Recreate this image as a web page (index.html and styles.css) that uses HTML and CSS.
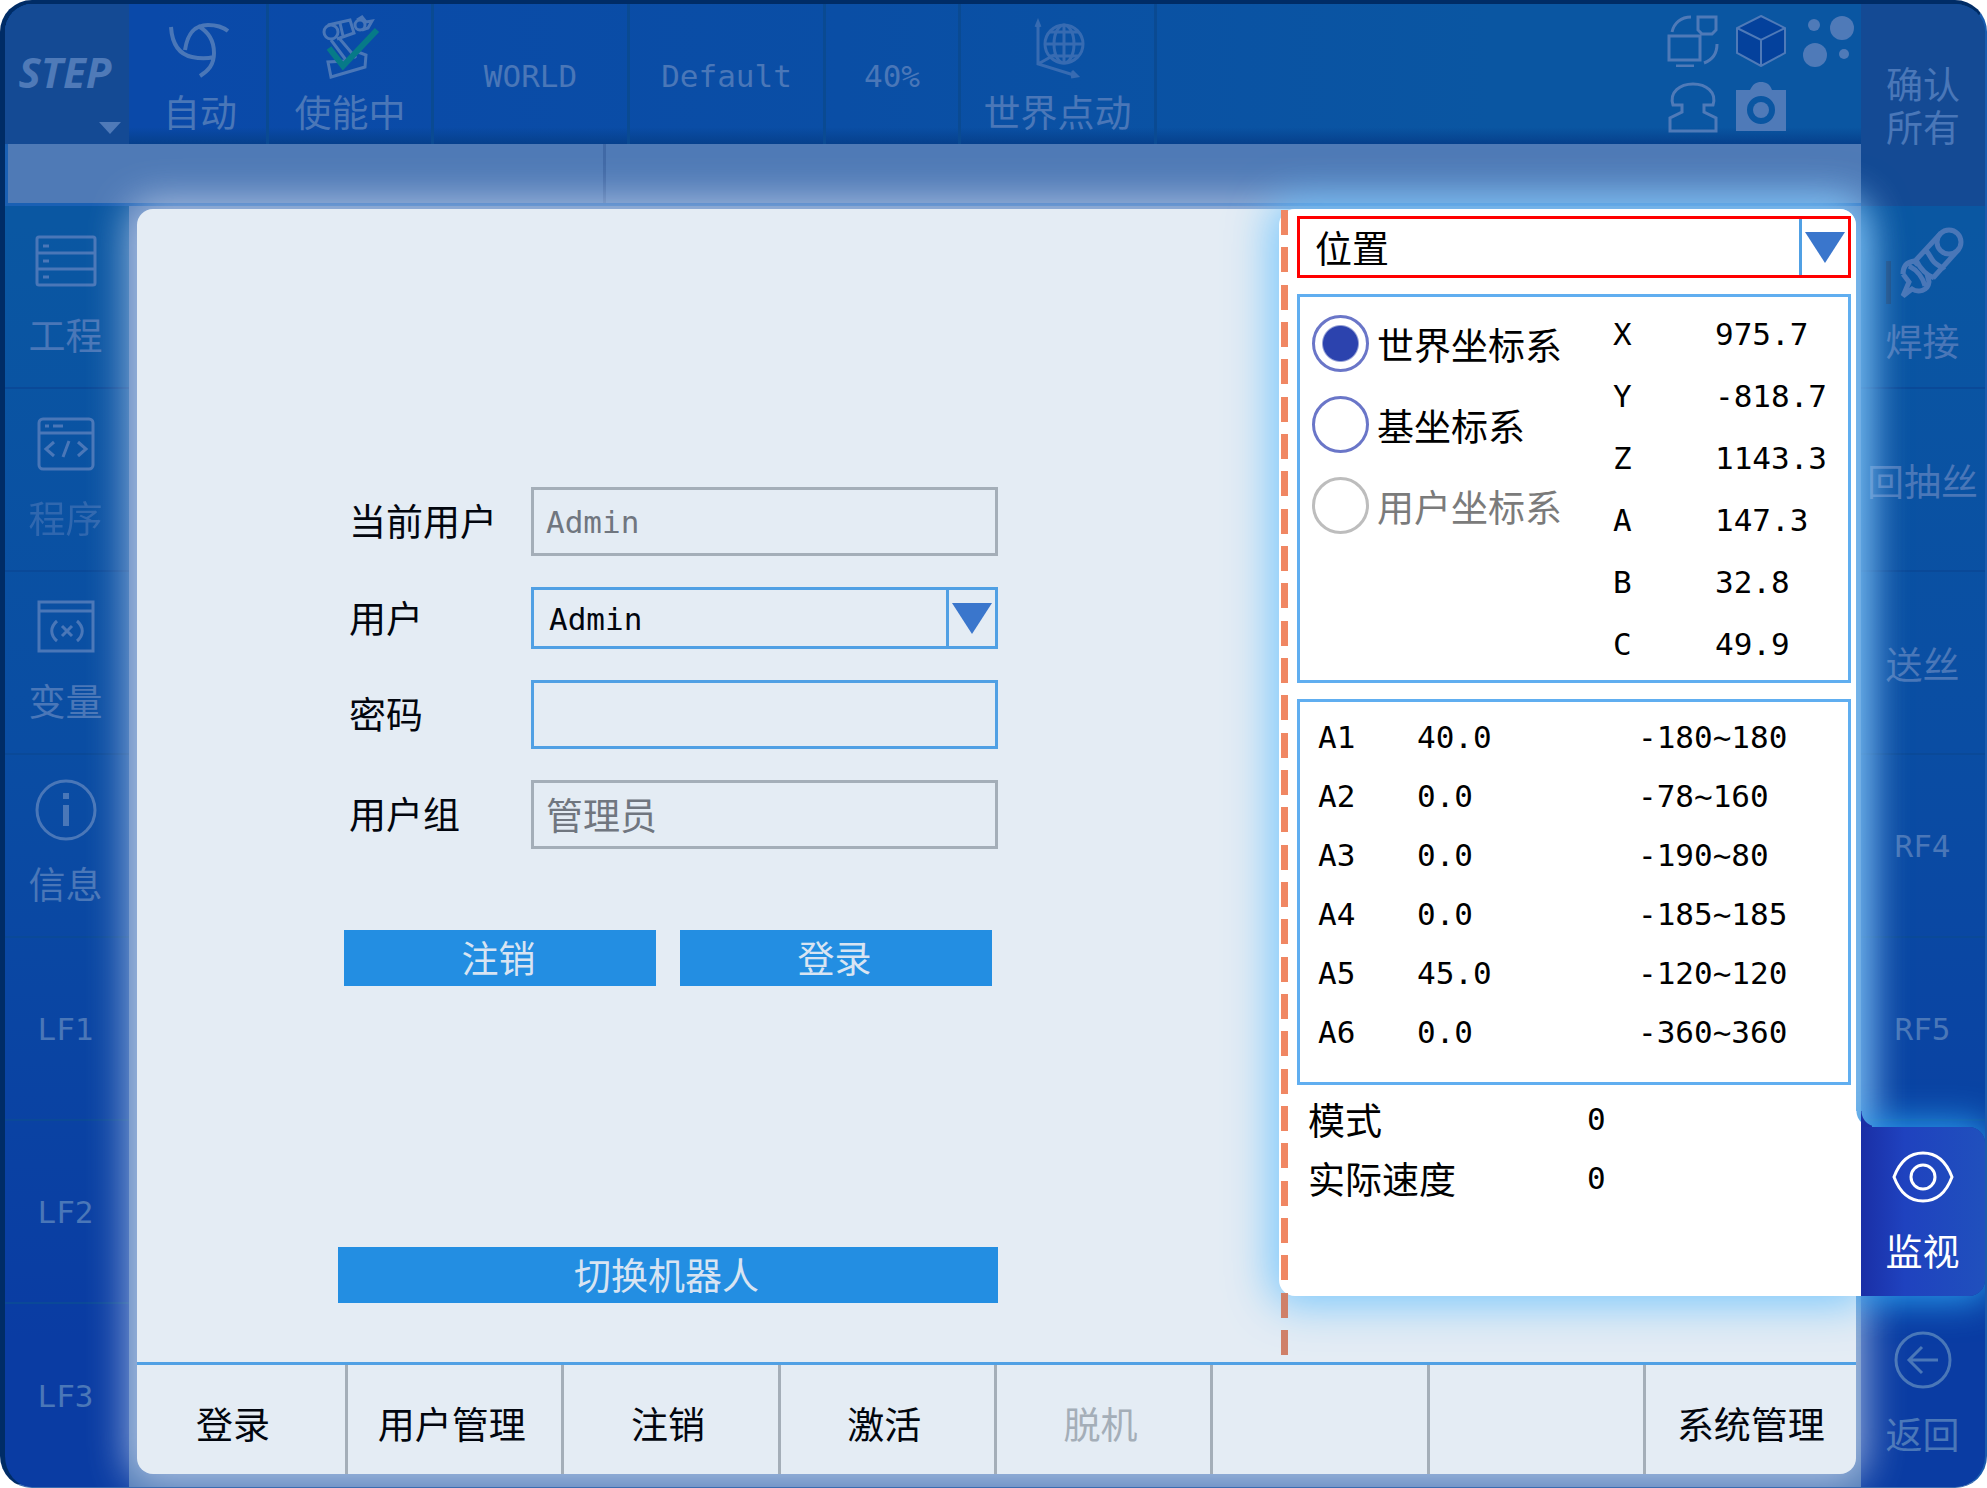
FILE: index.html
```html
<!DOCTYPE html>
<html lang="zh-CN">
<head>
<meta charset="utf-8">
<title>STEP</title>
<link rel="stylesheet" href="styles.css">
</head>
<body>
<div class="screen">
  <header class="topbar">
    <button class="brand" type="button">STEP<span class="caret"></span></button>
    <div class="status">
      <svg class="top-icon" viewBox="0 0 60 62" fill="none" stroke="currentColor" stroke-width="4"><path d="M1 10C2 25 8 37 22 40c9 2 14 2 22 0M15 33C17 20 22 8 38 8c8 0 15 2 20 6M28 9c11 6 16 16 16 27 0 12-6 18-14 23"/></svg>
      <span>自动</span>
    </div>
    <div class="status">
      <svg class="top-icon" viewBox="0 0 60 62" fill="none" stroke="currentColor" stroke-width="3"><circle cx="11" cy="15" r="7"/><path d="M8 8l22-5 4 13-17 6M20 6l3 13"/><circle cx="40" cy="8" r="5"/><path d="M37 3l5-3 4 5 6-1-4 7-6 2M11 23l15 20M19 21l17 20M8 45l3 15 34-10 1-12-8-3-12 9z"/><path class="tick" d="M9 31l14 18L57 13" stroke-width="6"/></svg>
      <span>使能中</span>
    </div>
    <div class="status mono">WORLD</div>
    <div class="status mono">Default</div>
    <div class="status mono">40%</div>
    <div class="status">
      <svg class="top-icon faint" viewBox="0 0 60 62" fill="none" stroke="currentColor" stroke-width="3"><path d="M10 5v42l39 12M8 10l2-5 2 5M44 54l5 5-6 1M10 47l18-10"/><circle cx="36" cy="27" r="19"/><ellipse cx="36" cy="27" rx="10" ry="19"/><path d="M36 8v38M17 27h38M22 15h28M22 39h28"/></svg>
      <span>世界点动</span>
    </div>
    <div class="tools">
      <svg viewBox="0 0 52 52" fill="none" stroke="currentColor" stroke-width="3"><path d="M5 17C7 8 14 2 24 2M31 2h18v13l-4 4H35l-4-4zM2 21h31v24H2zM9 51h18M50 29c0 10-5 16-13 19"/></svg>
      <svg viewBox="0 0 52 52" stroke="currentColor" stroke-width="2"><path class="cube" d="M26 1l24 12v25L26 51 2 38V13z"/><path d="M2 13l24 12 24-12M26 25v26" fill="none"/></svg>
      <svg viewBox="0 0 52 52" fill="currentColor"><circle cx="11" cy="10" r="6"/><circle cx="39" cy="13" r="12"/><circle cx="12" cy="40" r="12"/><circle cx="41" cy="39" r="5"/></svg>
      <svg viewBox="0 0 52 52" fill="none" stroke="currentColor" stroke-width="3"><path d="M15 30v-7H6C2 10 13 2 26 2s24 8 20 21h-9v7l12 6v13H3V36z"/></svg>
      <svg viewBox="0 0 52 52" fill="currentColor"><path fill-rule="evenodd" d="M1 8h14c3-6 6-8 11-8s9 2 11 8h14v41H1zM26 14a14 14 0 1 0 0 28 14 14 0 0 0 0-28z"/><circle cx="26" cy="28" r="8"/></svg>
    </div>
  </header>
  <button class="confirm" type="button">确认<br>所有</button>
  <div class="message"><span></span><span></span></div>

  <nav class="side left">
    <button type="button"><svg viewBox="0 0 62 62" fill="none" stroke="currentColor" stroke-width="3"><rect x="2" y="7" width="58" height="48" rx="2"/><path d="M2 23h58M2 39h58M8 16h6M8 31h6M8 47h6"/></svg>工程</button>
    <button class="dim" type="button"><svg viewBox="0 0 62 62" fill="none" stroke="currentColor" stroke-width="3"><rect x="4" y="6" width="54" height="50" rx="4"/><path d="M4 20h54M10 13h4M18 13h10M19 29l-8 7 8 7M34 28l-6 16M43 29l8 7-8 7"/></svg><span>程序</span></button>
    <button type="button"><svg viewBox="0 0 62 62" fill="none" stroke="currentColor" stroke-width="3"><path d="M4 6h54v49H4zM4 15h54M22 25c-7 6-7 14 0 20M42 25c7 6 7 14 0 20M27 30l10 10M37 30L27 40"/></svg>变量</button>
    <button type="button"><svg viewBox="0 0 62 62" fill="none" stroke="currentColor" stroke-width="3"><circle cx="31" cy="31" r="29"/><path d="M31 26v21M31 14v6" stroke-width="6"/></svg>信息</button>
    <button class="mono" type="button">LF1</button>
    <button class="mono" type="button">LF2</button>
    <button class="mono" type="button">LF3</button>
  </nav>

  <main class="panel">
    <form class="login">
      <div class="fields">
        <label for="current">当前用户</label>
        <input id="current" class="mono" type="text" value="Admin" disabled>
        <label for="user">用户</label>
        <div class="picker">
          <select id="user" class="mono"><option>Admin</option></select>
          <span class="arrow"></span>
        </div>
        <label for="password">密码</label>
        <input id="password" type="password">
        <label for="group">用户组</label>
        <input id="group" type="text" value="管理员" disabled>
      </div>
      <div class="actions">
        <button type="button">注销</button>
        <button type="button">登录</button>
      </div>
      <button class="switch" type="button">切换机器人</button>
    </form>

    <div class="monitor-side">
      <section class="monitor">
        <div class="picker alert">
          <select aria-label="监视"><option>位置</option></select>
          <span class="arrow"></span>
        </div>
        <div class="box frames">
          <div class="radios">
            <label><input type="radio" name="frame" checked>世界坐标系</label>
            <label><input type="radio" name="frame">基坐标系</label>
            <label class="off"><input type="radio" name="frame" disabled>用户坐标系</label>
          </div>
          <table class="pose mono">
            <tr><th>X</th><td>975.7</td></tr>
            <tr><th>Y</th><td>-818.7</td></tr>
            <tr><th>Z</th><td>1143.3</td></tr>
            <tr><th>A</th><td>147.3</td></tr>
            <tr><th>B</th><td>32.8</td></tr>
            <tr><th>C</th><td>49.9</td></tr>
          </table>
        </div>
        <div class="box axes">
          <table class="mono">
            <tr><th>A1</th><td>40.0</td><td>-180~180</td></tr>
            <tr><th>A2</th><td>0.0</td><td>-78~160</td></tr>
            <tr><th>A3</th><td>0.0</td><td>-190~80</td></tr>
            <tr><th>A4</th><td>0.0</td><td>-185~185</td></tr>
            <tr><th>A5</th><td>45.0</td><td>-120~120</td></tr>
            <tr><th>A6</th><td>0.0</td><td>-360~360</td></tr>
          </table>
        </div>
        <dl class="summary">
          <dt>模式</dt><dd class="mono">0</dd>
          <dt>实际速度</dt><dd class="mono">0</dd>
        </dl>
      </section>
    </div>

    <nav class="tabs">
      <button type="button">登录</button>
      <button type="button">用户管理</button>
      <button type="button">注销</button>
      <button type="button">激活</button>
      <button type="button" disabled>脱机</button>
      <button type="button" aria-label="F6"></button>
      <button type="button" aria-label="F7"></button>
      <button type="button">系统管理</button>
    </nav>
  </main>

  <nav class="side right">
    <button class="weld" type="button"><svg viewBox="0 0 68 68" fill="none" stroke="currentColor" stroke-width="5"><circle cx="60" cy="12" r="12"/><path d="M52 3L27 30M70 19L44 48M36 20c4 2 5 8 9 12s8 5 10 8M27 30c3 6 8 14 18 18M14 44c0-8 4-12 11-13l4 4M14 44l6 8-6 14 9-7c6 4 16 2 17-7l-2-8M20 36c8 4 14 12 16 20"/></svg>焊接</button>
    <button type="button">回抽丝</button>
    <button type="button">送丝</button>
    <button class="mono" type="button">RF4</button>
    <button class="mono" type="button">RF5</button>
    <button class="active" type="button"><svg viewBox="0 0 62 62" fill="none" stroke="currentColor" stroke-width="3"><path d="M2 31C8 15 18 7 31 7s23 8 29 24c-6 16-16 24-29 24S8 47 2 31z"/><circle cx="31" cy="31" r="12"/></svg>监视</button>
    <button type="button"><svg viewBox="0 0 62 62" fill="none" stroke="currentColor" stroke-width="3"><circle cx="31" cy="31" r="27"/><path d="M17 31h29M30 18L17 31l13 13"/></svg>返回</button>
  </nav>
</div>
</body>
</html>
```
FILE: styles.css
```css
* { box-sizing: border-box; }

body {
  margin: 0;
  background: #fff;
  font: 37px/48px "Noto Sans CJK SC", sans-serif;
}

button, input, select { font: inherit; color: inherit; margin: 0; }
button { border: 0; background: none; padding: 0; }

.mono { font: 31px/48px "DejaVu Sans Mono", monospace; }

/* Shell */
.screen {
  display: grid;
  grid-template: 140px 62px 1fr / 124px 1fr 124px;
  min-height: 100vh;
  overflow: hidden;
  border: solid #002c66;
  border-width: 4px 2px 1px 5px;
  border-right-color: #1a5cae;
  border-bottom-color: #3a6cb0;
  border-radius: 32px;
  background: linear-gradient(#0a57a2 15%, #0a4da3 50%, #0a3ca3 90%);
  color: #4a77b8;
}

/* Top bar */
.topbar {
  grid-area: 1 / 1 / 2 / 3;
  display: flex;
  background:
    linear-gradient(transparent 88%, #06408c),
    linear-gradient(90deg, #0a49a9 8%, #0a4ea5 45%, #0a56a2 80%);
}
.brand {
  position: relative;
  width: 124px;
  margin-right: 5px;
  padding: 0 4px 4px 0;
  background: #144a94;
  color: #4f7ab8;
  font: italic bold 42px/48px "Open Sans", sans-serif;
}
.caret {
  position: absolute;
  right: 8px;
  bottom: 10px;
  border: solid transparent;
  border-width: 12px 11px 0;
  border-top-color: #4f7ab8;
}
.status {
  display: flex;
  flex-direction: column;
  align-items: center;
  justify-content: center;
  width: 196px;
  padding-top: 4px;
  border-right: 3px solid #0a4a92;
}
.status:nth-of-type(1) { width: 135px; }
.status:nth-of-type(2) { width: 165px; }
.status:nth-of-type(5) { width: 135px; }
.status span { margin-top: 8px; }
.top-icon { width: 60px; height: 62px; overflow: visible; }
.faint { opacity: 0.7; }
.tick { stroke: #067a88; }
.tools {
  display: grid;
  grid-template-columns: repeat(3, 52px);
  gap: 15px 16px;
  align-content: start;
  margin-left: auto;
  padding: 11px 6px 0 0;
  color: #4f7ab8;
}
.tools svg { width: 52px; height: 52px; }
.cube { fill: #04419c; }
.confirm {
  grid-area: 1 / 3 / 3 / 4;
  background: #144a94;
  line-height: 43px;
}
.message {
  grid-area: 2 / 1 / 3 / 3;
  display: grid;
  grid-template-columns: 595px 1fr;
  border: solid #1a60b4;
  border-width: 0 0 3px 3px;
  background: #4f7ab6;
}
.message span + span { border-left: 3px solid #4069a6; }

/* Side keys */
.side {
  display: grid;
  grid-auto-rows: 1fr;
}
.side button {
  display: flex;
  flex-direction: column;
  align-items: center;
  justify-content: center;
  gap: 18px;
  padding-right: 3px;
  white-space: nowrap;
  border-bottom: 2px solid #0a4998;
}
.side button:last-child { border-bottom: 0; }
.side button:has(svg) { padding-bottom: 5px; }
.side svg { width: 62px; height: 62px; flex: none; }
.left { grid-area: 3 / 1; }
.right { grid-area: 3 / 3; }
.right button { padding-right: 1px; }
.dim span { opacity: 0.6; }
.side .weld {
  position: relative;
  padding-bottom: 0;
}
.weld svg { width: 68px; height: 68px; overflow: visible; }
.weld::before {
  content: "";
  position: absolute;
  left: 25px;
  top: 55px;
  width: 5px;
  height: 43px;
  background: #144680;
}
.side .active {
  position: relative;
  z-index: 3;
  margin: 6px 0 8px;
  padding-bottom: 4px;
  border: 0;
  border-radius: 0 16px 16px 0;
  background: linear-gradient(90deg, #1a2fa6, #1f42bf 35%, #2050bd);
  color: #fff;
  box-shadow: 0 0 36px 4px #2aa0f0;
  clip-path: inset(-50px -50px -50px -5px);
}
/* joins the tab to the monitor pane, with a concave corner above it */
.active::before {
  content: "";
  position: absolute;
  inset: 0 100% 0 auto;
  width: 5px;
  background: #fff;
}
.active::after {
  content: "";
  position: absolute;
  left: -5px;
  bottom: 100%;
  width: 16px;
  height: 16px;
  background: radial-gradient(circle at 100% 0, transparent 15px, #1a2fa6 16px) 5px 0 no-repeat,
    radial-gradient(circle at 100% 0, transparent 15px, #fff 16px);
}

/* Main panel */
.panel {
  position: relative;
  z-index: 2;
  grid-area: 3 / 2;
  display: grid;
  grid-template: 1fr auto / 1fr 577px;
  margin: 3px 5px 13px 8px;
  border-radius: 16px;
  background: #e4ecf4;
  box-shadow: 0 0 40px 8px #d2def6bb;
  color: #02060e;
}
.screen::before {
  content: "";
  grid-area: 3 / 2;
  background: #4f7ab6;
}

/* Login form */
.login {
  width: 660px;
  margin: 278px 0 0 201px;
}
.fields {
  display: grid;
  grid-template-columns: 181px 1fr;
  gap: 31px 12px;
  align-items: center;
}
.fields label { padding: 0 0 3px 11px; }
.fields input, .fields .picker { min-width: 0; }
input[type="text"], input[type="password"] {
  height: 69px;
  padding: 0 12px 2px;
  border: 3px solid #50a0e4;
  border-radius: 0;
  background: none;
}
input:disabled { border-color: #a4aeb8; color: #70767f; }
input.mono:disabled { padding: 0 12px; }
.picker {
  position: relative;
  height: 62px;
  border: 3px solid #50a0e4;
}
.picker select {
  width: 100%;
  height: 100%;
  padding: 0 60px 0 15px;
  border: 0;
  border-radius: 0;
  background: none;
  appearance: none;
}
.arrow {
  position: absolute;
  top: 0;
  right: 0;
  bottom: 0;
  width: 49px;
  border-left: 3px solid #50a0e4;
  pointer-events: none;
}
.arrow::before {
  content: "";
  position: absolute;
  top: 13px;
  left: 3px;
  border: solid transparent;
  border-width: 31px 20px 0;
  border-top-color: #3a76cc;
}
.actions {
  display: grid;
  grid-template-columns: 1fr 1fr;
  gap: 24px;
  margin: 81px 6px 0;
}
.actions button, .switch {
  height: 56px;
  padding: 0 3px 3px 0;
  background: #238ee2;
  color: #d8e4f2;
}
.switch { display: block; width: 100%; margin-top: 261px; }

/* Monitor pane */
.monitor-side { position: relative; padding-bottom: 66px; }
.monitor-side::after {
  content: "";
  position: absolute;
  inset: 1px auto 5px 2px;
  width: 7px;
  background: linear-gradient(#f08763 94%, #cf8069 94%);
  mask: repeating-linear-gradient(#000 0 25px, transparent 25px 37px, #000 37px 62px, transparent 62px 75px, #000 75px 100px, transparent 100px 112px);
}
.monitor {
  height: 100%;
  padding: 7px 5px 52px 18px;
  border-radius: 16px 16px 0 16px;
  background: #fff;
  box-shadow: 0 0 44px 8px #5cbeffcc;
  color: #000;
}
.picker.alert { border-color: #f00; }
.box {
  margin-top: 16px;
  border: 3px solid #60aef0;
}
.frames {
  display: flex;
  justify-content: space-between;
  align-items: flex-start;
  height: 389px;
  padding: 6px 0 0 12px;
}
.radios { display: grid; }
.radios label {
  display: flex;
  align-items: center;
  gap: 8px;
  height: 81px;
}
.radios input {
  flex: none;
  width: 57px;
  height: 57px;
  margin: 0;
  border: 3px solid #6a76c8;
  border-radius: 50%;
  appearance: none;
}
.radios input:checked { background: radial-gradient(circle, #2c43ae 17px, transparent 19px); }
.radios input:disabled { border-color: #bdbdbd; }
.off { color: #7b7b7b; }
table { border-collapse: collapse; }
th, td { padding: 0; font-weight: 400; text-align: left; }
.pose tr { height: 62px; }
.pose th { width: 102px; }
.pose td { width: 133px; }
.axes { height: 386px; padding: 5px 0 0 18px; }
.axes table { width: 100%; table-layout: fixed; }
.axes tr { height: 59px; }
.axes th { width: 99px; }
.axes td { width: 221px; }
.axes td:last-child { width: auto; }
.summary {
  display: grid;
  grid-template-columns: 279px 1fr;
  grid-auto-rows: 59px;
  align-items: center;
  margin: 4px 0 0 11px;
}
.summary dd { margin: 0; }

/* Bottom soft keys */
.tabs {
  grid-column: 1 / 3;
  display: grid;
  grid-template-columns: 208fr repeat(6, 216fr) 213fr;
  height: 112px;
  border-top: 3px solid #50a0e4;
}
.tabs button + button { border-left: 3px solid #a4aeb8; }
.tabs button { padding: 6px 6px 0 0; }
.tabs button:first-child { padding-right: 16px; }
.tabs button:last-child { padding-right: 0; }
.tabs button:disabled { color: #a4aeb8; }
```
